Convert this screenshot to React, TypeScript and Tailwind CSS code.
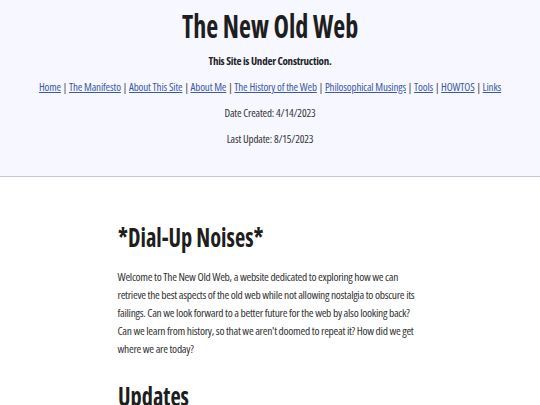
import React from "react";

const links = [
  "Home",
  "The Manifesto",
  "About This Site",
  "About Me",
  "The History of the Web",
  "Philosophical Musings",
  "Tools",
  "HOWTOS",
  "Links",
];

export default function App() {
  return (
    <div
      className="min-h-[405px] bg-white text-[#222] tracking-[-0.15px]"
      style={{ fontFamily: '"Open Sans", "Noto Sans", sans-serif', fontStretch: "75%" }}
    >
      <header className="bg-[#f6f7ff] border-b border-[#c8c8d4] pt-[8px] pb-[29px] text-center">
        <h1 className="text-[32px] font-bold leading-[36px] text-[#1e1e1e] tracking-normal">
          <span className="inline-block scale-x-[0.815]">The New Old Web</span>
        </h1>
        <p className="mt-[9px] text-[11px] font-bold leading-[16px] tracking-[-0.25px]">
          This Site is Under Construction.
        </p>
        <nav className="mt-[10px] text-[11px] leading-[16px] text-[#333]">
          {links.map((l, i) => (
            <React.Fragment key={l}>
              {i > 0 && <span> | </span>}
              <a href="#" className="text-[#3a5aa6] underline">
                {l}
              </a>
            </React.Fragment>
          ))}
        </nav>
        <p className="mt-[10px] text-[11px] leading-[16px] text-[#333]">Date Created: 4/14/2023</p>
        <p className="mt-[10px] text-[11px] leading-[16px] text-[#333]">Last Update: 8/15/2023</p>
      </header>
      <main className="mx-auto w-[305px] pt-[44px]">
        <h2 className="text-[26px] font-bold leading-[32px] text-[#1e1e1e] tracking-normal">
          <span className="inline-block origin-left scale-x-[0.86]">*Dial-Up Noises*</span>
        </h2>
        <p className="mt-[15px] text-[11.5px] leading-[18px] text-[#333] tracking-[-0.3px]">
          Welcome to The New Old Web, a website dedicated to exploring how we can retrieve the best aspects of
          the old web while not allowing nostalgia to obscure its failings. Can we look forward to a better
          future for the web by also looking back? Can we learn from history, so that we aren't doomed to
          repeat it? How did we get where we are today?
        </p>
        <h2 className="mt-[22px] text-[26px] font-bold leading-[32px] text-[#1e1e1e] tracking-normal">
          <span className="inline-block origin-left scale-x-[0.86]">Updates</span>
        </h2>
      </main>
    </div>
  );
}
